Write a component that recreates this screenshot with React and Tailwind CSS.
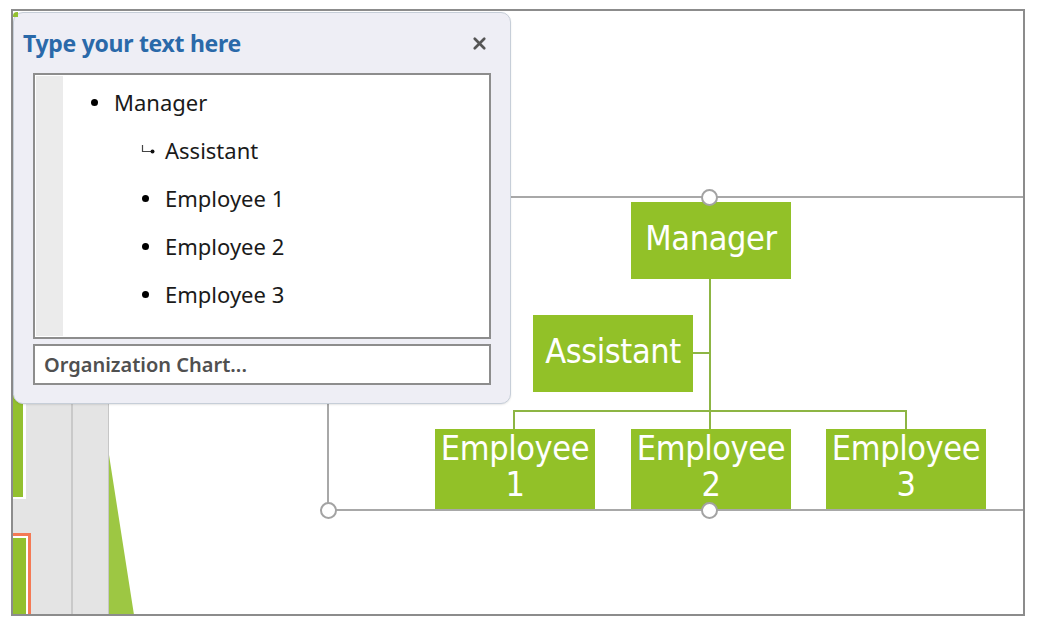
import { X } from "lucide-react";

const boxFont = { fontFamily: '"DejaVu Sans Condensed", "DejaVu Sans", sans-serif' };

const Handle = ({ x, y }) => (
  <div
    className="absolute w-[17px] h-[17px] rounded-full border-2 border-[#a3a3a3] bg-white"
    style={{ left: x - 8, top: y - 8 }}
  />
);

const Node = ({ x, y, w, h, children }) => (
  <div
    className="absolute bg-[#92c128] text-white text-[34px] leading-[36px] flex flex-col items-center justify-center text-center pb-[6px] tracking-[-0.4px]"
    style={{ left: x, top: y, width: w, height: h, ...boxFont }}
  >
    {children}
  </div>
);

const Line = ({ className }) => <div className={`absolute ${className}`} />;

const items = [
  { label: "Manager", level: 0 },
  { label: "Assistant", level: 1, assistant: true },
  { label: "Employee 1", level: 1 },
  { label: "Employee 2", level: 1 },
  { label: "Employee 3", level: 1 },
];

const App = () => {
  return (
    <div className="relative w-[1040px] h-[634px] bg-white overflow-hidden font-['Noto_Sans',sans-serif]">

      {/* slide thumbnails strip, mostly hidden under the pane */}
      <div className="absolute left-[13px] top-[395px] w-[96px] h-[220px] bg-[#e4e4e4] border-r border-[#c6c6c6] flex">
        <div className="w-[20px] flex flex-col">
          <div className="w-[13px] h-[104px] bg-white">
            <div className="w-[10px] h-[102px] bg-[#93c02f]" />
          </div>
          <div className="w-[18px] mt-[34px] flex-1 bg-[#f47a55] pr-[3px] pt-[3px]">
            <div className="w-full h-full bg-white pr-[2px] pt-[2px]">
              <div className="w-full h-full bg-[#93c02f]" />
            </div>
          </div>
        </div>
        <div className="ml-[38px] w-[2px] bg-[#c9c9c9]" />
      </div>
      <svg className="absolute left-[109px] top-[440px]" width="40" height="176">
        <polygon points="0,15 25,175 0,175" fill="#9dc743" />
      </svg>

      {/* diagram frame */}
      <Line className="left-[510px] top-[196px] w-[514px] h-[2px] bg-[#a8a8a8]" />
      <Line className="left-[327px] top-[400px] w-[2px] h-[110px] bg-[#a8a8a8]" />
      <Line className="left-[328px] top-[509px] w-[696px] h-[2px] bg-[#a8a8a8]" />

      {/* connectors */}
      <Line className="left-[709px] top-[278px] w-[2px] h-[151px] bg-[#8db544]" />
      <Line className="left-[692px] top-[352px] w-[17px] h-[2px] bg-[#8db544]" />
      <Line className="left-[513px] top-[410px] w-[394px] h-[19px] border-x-2 border-t-2 border-[#8db544]" />

      <Node x={631} y={202} w={160} h={77}>Manager</Node>
      <Node x={533} y={315} w={160} h={77}>Assistant</Node>
      <Node x={435} y={429} w={160} h={80}>
        <span>Employee</span>
        <span>1</span>
      </Node>
      <Node x={631} y={429} w={160} h={80}>
        <span>Employee</span>
        <span>2</span>
      </Node>
      <Node x={826} y={429} w={160} h={80}>
        <span>Employee</span>
        <span>3</span>
      </Node>

      <Handle x={709} y={197} />
      <Handle x={328} y={510} />
      <Handle x={709} y={510} />

      {/* outer frame */}
      <div className="absolute left-[11px] top-[9px] w-[1014px] h-[607px] border-2 border-[#8c8c8c] pointer-events-none" />

      {/* text pane */}
      <div className="absolute left-[13px] top-[12px] w-[498px] h-[392px] rounded-[10px] bg-[#eeeef5] border border-[#c6ced8] flex flex-col shadow-[0_1px_2px_rgba(0,0,0,0.1)]">
        <div className="absolute -left-px -top-px w-[5px] h-[5px] bg-[#93c02f] rounded-tl-[4px]" />

        <div className="h-[60px] flex items-center justify-between pl-[9px] pr-[21px]">
          <h1 className="text-[23px] font-bold text-[#2a69a9] tracking-[-0.3px]">
            Type your text here
          </h1>
          <X size={19} strokeWidth={3.4} className="text-[#555555]" />
        </div>

        <div className="mx-[19px] h-[266px] border-2 border-[#8d8d8d] bg-white flex">
          <div className="w-[27px] ml-[1px] my-[1px] bg-[#ebebeb]" />

          <ul className="flex-1 pt-[3px] text-[22px] text-[#1a1a1a]">
            {items.map((item) => (
              <li
                key={item.label}
                className={`h-[48px] flex items-center ${item.level === 0 ? "pl-[28px]" : "pl-[79px]"}`}
              >
                {item.assistant ? (
                  <svg width="23" height="12" className="ml-[-2px] mr-[2px]" viewBox="0 0 23 12">
                    <path d="M2.5 1 V7.5 H11" stroke="#444" strokeWidth="1.2" fill="none" />
                    <circle cx="12.5" cy="7.5" r="2" fill="#111" />
                  </svg>
                ) : (
                  <span className="w-[7px] h-[7px] rounded-full bg-black mr-[16px]" />
                )}
                <span>{item.label}</span>
              </li>
            ))}
          </ul>
        </div>

        <div className="mx-[19px] mt-[5px] h-[41px] border-2 border-[#8d8d8d] bg-white flex items-center pl-[9px]">
          <span className="text-[20px] font-semibold text-[#505050]">
            Organization Chart...
          </span>
        </div>
      </div>

    </div>
  );
};

export default App;
